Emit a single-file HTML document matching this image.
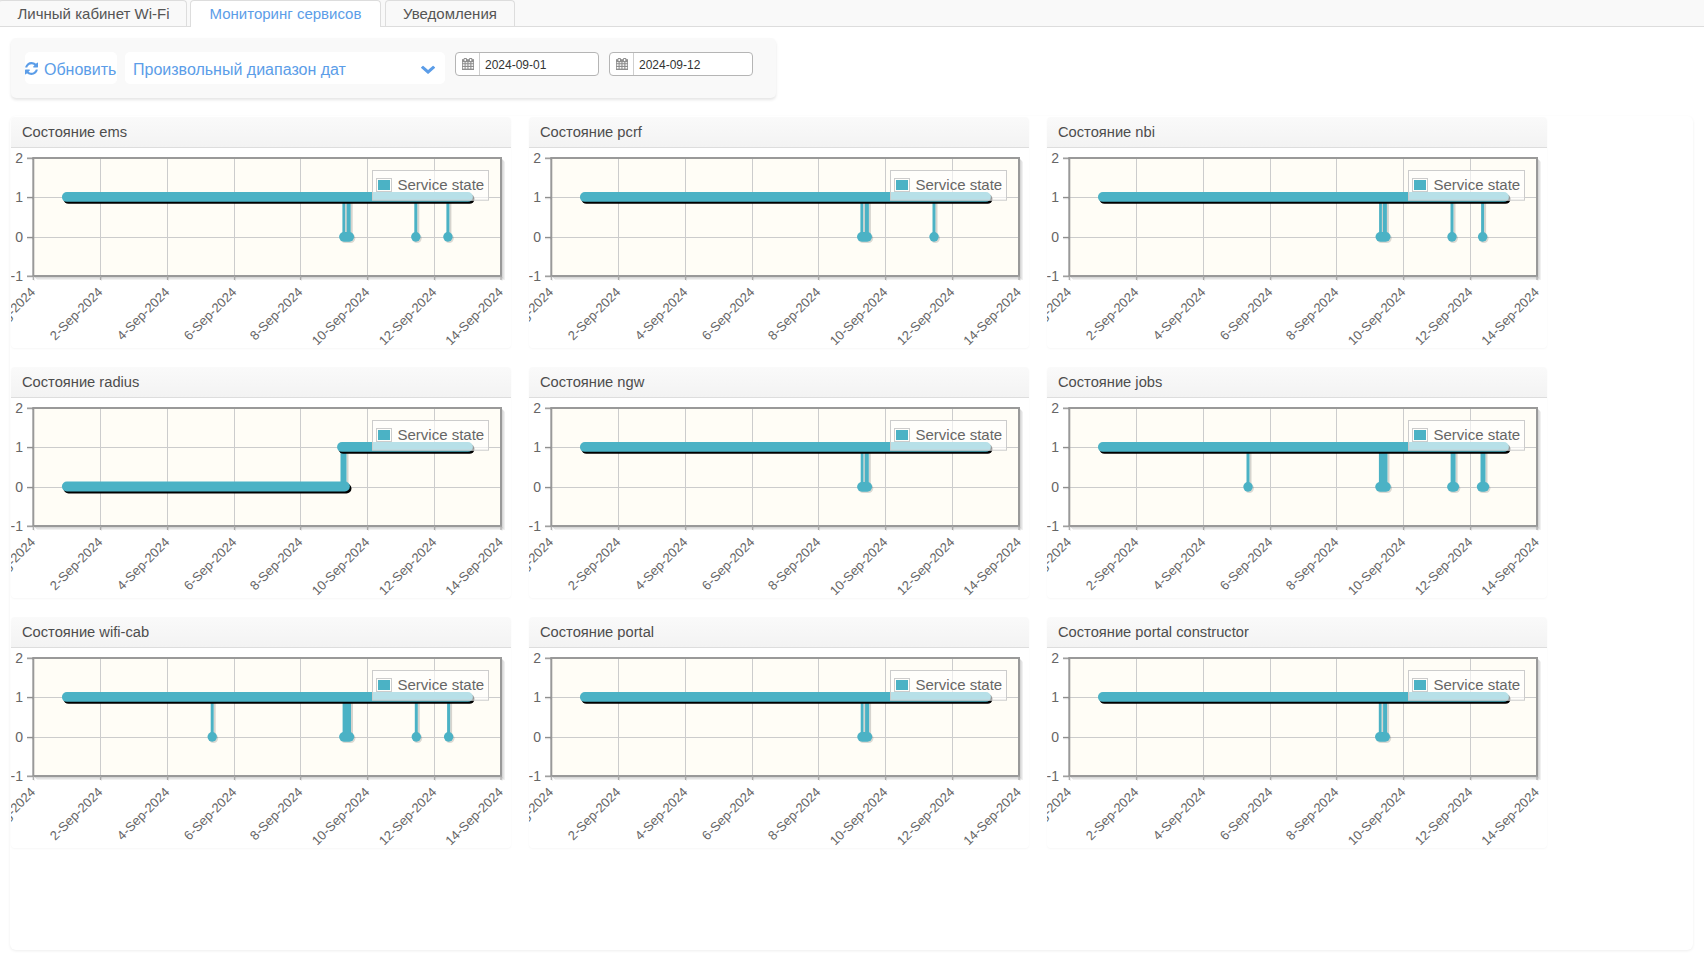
<!DOCTYPE html>
<html><head><meta charset="utf-8"><title>Мониторинг сервисов</title>
<style>
*{box-sizing:border-box}
html,body{margin:0;padding:0}
body{width:1704px;height:957px;overflow:hidden;background:#fff;position:relative;font-family:"Liberation Sans",sans-serif;color:#333}
.abs{position:absolute}
.tabbar{left:0;top:0;width:1704px;height:27px;background:#f9f9f9;border-bottom:1px solid #dddddd}
.tab{top:0;height:26px;border:1px solid #dddddd;border-bottom:none;border-radius:4px 4px 0 0;background:#f9f9f9;font-size:15px;color:#555;line-height:26px;text-align:center;white-space:nowrap}
.tab.act{background:#fff;height:27px;color:#5b9de8}
.toolbar{left:11px;top:38px;width:765px;height:60px;background:#f9f9f9;border-radius:5px;box-shadow:0 2px 3px rgba(0,0,0,0.10)}
.btn{background:#fff;border-radius:5px;top:52px;height:32px}
.blue{color:#5b9de8}
.dinp{top:52px;height:24px;background:#fff;border:1px solid #b5b5b5;border-radius:4px}
.dinp .sep{position:absolute;left:23px;top:0;width:1px;height:22px;background:#cfcfcf}
.dinp .txt{position:absolute;left:29px;top:1px;line-height:22px;font-size:12px;color:#333}
.container{left:10px;top:116px;width:1683px;height:834px;background:#ffffff;border-radius:6px;box-shadow:0 1px 3px rgba(0,0,0,0.07)}
.panel{width:500px;height:231px;background:#fff;border-radius:4px;box-shadow:0 1px 2px rgba(0,0,0,0.035)}
.ph{left:0;top:0;width:500px;height:31px;background:linear-gradient(#fafafa,#f3f3f3);border-bottom:1px solid #dddddd;border-radius:4px 4px 0 0;font-size:14.7px;line-height:30px;padding-left:11px;color:#4d4d4d;white-space:nowrap}
svg text{font-family:"Liberation Sans",sans-serif}
.yl{font-size:14px;fill:#666}
.xl{font-size:13px;fill:#666}
.lg{font-size:15px;fill:#666}
</style></head><body>

<div class="abs tabbar"></div>
<div class="abs tab" style="left:-2px;width:189px;padding-left:2px">Личный кабинет Wi-Fi</div>
<div class="abs tab act" style="left:190px;width:191px">Мониторинг сервисов</div>
<div class="abs tab" style="left:385px;width:130px">Уведомления</div>
<div class="abs toolbar"></div>
<div class="abs btn" style="left:25px;width:92px"></div>
<svg class="abs" style="left:25px;top:62px" width="13" height="13" viewBox="0 0 1536 1536"><path fill="#5b9de8" d="M1511 928q0 5-1 7-64 268-268 434.5T764 1536q-146 0-282.5-55T238 1324l-129 128q-19 19-45 19t-45-19-19-45V960q0-26 19-45t45-19h448q26 0 45 19t19 45-19 45l-137 137q71 66 161 102t187 36q134 0 250-65t186-179q11-17 53-117 8-23 30-23h192q13 0 22.5 9.5t9.5 22.5zm25-800v448q0 26-19 45t-45 19h-448q-26 0-45-19t-19-45 19-45l138-138Q969 256 768 256q-134 0-250 65T332 500q-11 17-53 117-8 23-30 23H50q-13 0-22.5-9.5T18 608v-7q65-268 270-434.5T768 0q146 0 284 55.5T1297 212l130-129q19-19 45-19t45 19 19 45z"/></svg>
<div class="abs blue" style="left:44px;top:53.5px;line-height:32px;font-size:16px">Обновить</div>
<div class="abs btn" style="left:125px;width:320px"></div>
<div class="abs blue" style="left:133px;top:53.5px;line-height:32px;font-size:16px">Произвольный диапазон дат</div>
<svg class="abs" style="left:415px;top:60px" width="26" height="20" viewBox="0 0 26 20"><path transform="translate(6 5.75) scale(0.008747 0.007874) translate(-90 -533)" fill="#5b9de8" d="M1683 808l-742 741q-19 19-45 19t-45-19L109 808q-19-19-19-45.5t19-45.5l166-165q19-19 45-19t45 19l531 531 531-531q19-19 45-19t45 19l166 165q19 19 19 45.5t-19 45.5z"/></svg>
<div class="abs dinp" style="left:455px;width:144px"><svg class="abs" style="left:6px;top:5px" width="12" height="12" viewBox="0 0 12 12"><rect x="0" y="1.2" width="12" height="10.8" fill="#8e8e8e"/><rect x="1.6" y="0" width="3.4" height="3" rx="1" fill="#8e8e8e"/><rect x="7" y="0" width="3.4" height="3" rx="1" fill="#8e8e8e"/><g fill="#ffffff"><rect x="2.5" y="1" width="1.4" height="2"/><rect x="7.9" y="1" width="1.4" height="2"/><rect x="0.8" y="4.2" width="1.8" height="1.0"/><rect x="0.8" y="6.3" width="1.8" height="1.5"/><rect x="0.8" y="9.0" width="1.8" height="1.6"/><rect x="3.6" y="4.2" width="1.8" height="1.0"/><rect x="3.6" y="6.3" width="1.8" height="1.5"/><rect x="3.6" y="9.0" width="1.8" height="1.6"/><rect x="6.5" y="4.2" width="1.8" height="1.0"/><rect x="6.5" y="6.3" width="1.8" height="1.5"/><rect x="6.5" y="9.0" width="1.8" height="1.6"/><rect x="9.4" y="4.2" width="1.8" height="1.0"/><rect x="9.4" y="6.3" width="1.8" height="1.5"/><rect x="9.4" y="9.0" width="1.8" height="1.6"/></g></svg><div class="sep"></div><div class="txt">2024-09-01</div></div>
<div class="abs dinp" style="left:609px;width:144px"><svg class="abs" style="left:6px;top:5px" width="12" height="12" viewBox="0 0 12 12"><rect x="0" y="1.2" width="12" height="10.8" fill="#8e8e8e"/><rect x="1.6" y="0" width="3.4" height="3" rx="1" fill="#8e8e8e"/><rect x="7" y="0" width="3.4" height="3" rx="1" fill="#8e8e8e"/><g fill="#ffffff"><rect x="2.5" y="1" width="1.4" height="2"/><rect x="7.9" y="1" width="1.4" height="2"/><rect x="0.8" y="4.2" width="1.8" height="1.0"/><rect x="0.8" y="6.3" width="1.8" height="1.5"/><rect x="0.8" y="9.0" width="1.8" height="1.6"/><rect x="3.6" y="4.2" width="1.8" height="1.0"/><rect x="3.6" y="6.3" width="1.8" height="1.5"/><rect x="3.6" y="9.0" width="1.8" height="1.6"/><rect x="6.5" y="4.2" width="1.8" height="1.0"/><rect x="6.5" y="6.3" width="1.8" height="1.5"/><rect x="6.5" y="9.0" width="1.8" height="1.6"/><rect x="9.4" y="4.2" width="1.8" height="1.0"/><rect x="9.4" y="6.3" width="1.8" height="1.5"/><rect x="9.4" y="9.0" width="1.8" height="1.6"/></g></svg><div class="sep"></div><div class="txt">2024-09-12</div></div>
<div class="abs container"></div>
<div class="abs panel" style="left:11px;top:117px"><div class="abs ph">Состояние ems</div></div>
<div class="abs panel" style="left:529px;top:117px"><div class="abs ph">Состояние pcrf</div></div>
<div class="abs panel" style="left:1047px;top:117px"><div class="abs ph">Состояние nbi</div></div>
<div class="abs panel" style="left:11px;top:367px"><div class="abs ph">Состояние radius</div></div>
<div class="abs panel" style="left:529px;top:367px"><div class="abs ph">Состояние ngw</div></div>
<div class="abs panel" style="left:1047px;top:367px"><div class="abs ph">Состояние jobs</div></div>
<div class="abs panel" style="left:11px;top:617px"><div class="abs ph">Состояние wifi-cab</div></div>
<div class="abs panel" style="left:529px;top:617px"><div class="abs ph">Состояние portal</div></div>
<div class="abs panel" style="left:1047px;top:617px"><div class="abs ph">Состояние portal constructor</div></div>
<svg class="abs" style="left:0;top:0" width="1704" height="957" viewBox="0 0 1704 957">
<clipPath id="cp0_0"><rect x="11" y="117" width="500" height="231"/></clipPath>
<g clip-path="url(#cp0_0)"><g transform="translate(0,0)">
<rect x="33.3" y="158.0" width="467.7" height="118.0" fill="#fffdf6"/>
<line x1="100.5" y1="158.0" x2="100.5" y2="276.0" stroke="#cccccc" stroke-width="1"/>
<line x1="167.5" y1="158.0" x2="167.5" y2="276.0" stroke="#cccccc" stroke-width="1"/>
<line x1="234.5" y1="158.0" x2="234.5" y2="276.0" stroke="#cccccc" stroke-width="1"/>
<line x1="300.5" y1="158.0" x2="300.5" y2="276.0" stroke="#cccccc" stroke-width="1"/>
<line x1="367.5" y1="158.0" x2="367.5" y2="276.0" stroke="#cccccc" stroke-width="1"/>
<line x1="434.5" y1="158.0" x2="434.5" y2="276.0" stroke="#cccccc" stroke-width="1"/>
<line x1="33.3" y1="197.5" x2="501.0" y2="197.5" stroke="#cccccc" stroke-width="1"/>
<line x1="33.3" y1="237.5" x2="501.0" y2="237.5" stroke="#cccccc" stroke-width="1"/>
<path d="M34.8 277.5 H502.5 V159.5" fill="none" stroke="rgba(0,0,0,0.16)" stroke-width="1"/>
<path d="M35.8 278.5 H503.5 V160.5" fill="none" stroke="rgba(0,0,0,0.11)" stroke-width="1"/>
<path d="M36.8 279.5 H504.5 V161.5" fill="none" stroke="rgba(0,0,0,0.06)" stroke-width="1"/>
<rect x="33.3" y="158.0" width="467.7" height="118.0" fill="none" stroke="#999999" stroke-width="2"/>
<line x1="27" y1="159.39999999999998" x2="33.3" y2="159.39999999999998" stroke="rgba(0,0,0,0.08)" stroke-width="1.2"/>
<line x1="27" y1="158.2" x2="33.3" y2="158.2" stroke="#8f8f8f" stroke-width="1.3"/>
<text x="23" y="162.79999999999998" text-anchor="end" class="yl">2</text>
<line x1="27" y1="198.7" x2="33.3" y2="198.7" stroke="rgba(0,0,0,0.08)" stroke-width="1.2"/>
<line x1="27" y1="197.5" x2="33.3" y2="197.5" stroke="#8f8f8f" stroke-width="1.3"/>
<text x="23" y="202.1" text-anchor="end" class="yl">1</text>
<line x1="27" y1="238.7" x2="33.3" y2="238.7" stroke="rgba(0,0,0,0.08)" stroke-width="1.2"/>
<line x1="27" y1="237.5" x2="33.3" y2="237.5" stroke="#8f8f8f" stroke-width="1.3"/>
<text x="23" y="242.1" text-anchor="end" class="yl">0</text>
<line x1="27" y1="277.4" x2="33.3" y2="277.4" stroke="rgba(0,0,0,0.08)" stroke-width="1.2"/>
<line x1="27" y1="276.2" x2="33.3" y2="276.2" stroke="#8f8f8f" stroke-width="1.3"/>
<text x="23" y="280.8" text-anchor="end" class="yl">-1</text>
<line x1="34.3" y1="277.0" x2="34.3" y2="281.0" stroke="rgba(0,0,0,0.07)" stroke-width="1.2"/>
<line x1="33.3" y1="276.0" x2="33.3" y2="280.0" stroke="#a8a8a8" stroke-width="1.2"/>
<text transform="translate(29.799999999999997,286.5) rotate(-45)" x="0" y="9" text-anchor="end" class="xl">31-Aug-2024</text>
<line x1="101.5" y1="277.0" x2="101.5" y2="281.0" stroke="rgba(0,0,0,0.07)" stroke-width="1.2"/>
<line x1="100.5" y1="276.0" x2="100.5" y2="280.0" stroke="#a8a8a8" stroke-width="1.2"/>
<text transform="translate(97.0,286.5) rotate(-45)" x="0" y="9" text-anchor="end" class="xl">2-Sep-2024</text>
<line x1="168.5" y1="277.0" x2="168.5" y2="281.0" stroke="rgba(0,0,0,0.07)" stroke-width="1.2"/>
<line x1="167.5" y1="276.0" x2="167.5" y2="280.0" stroke="#a8a8a8" stroke-width="1.2"/>
<text transform="translate(164.0,286.5) rotate(-45)" x="0" y="9" text-anchor="end" class="xl">4-Sep-2024</text>
<line x1="235.5" y1="277.0" x2="235.5" y2="281.0" stroke="rgba(0,0,0,0.07)" stroke-width="1.2"/>
<line x1="234.5" y1="276.0" x2="234.5" y2="280.0" stroke="#a8a8a8" stroke-width="1.2"/>
<text transform="translate(231.0,286.5) rotate(-45)" x="0" y="9" text-anchor="end" class="xl">6-Sep-2024</text>
<line x1="301.5" y1="277.0" x2="301.5" y2="281.0" stroke="rgba(0,0,0,0.07)" stroke-width="1.2"/>
<line x1="300.5" y1="276.0" x2="300.5" y2="280.0" stroke="#a8a8a8" stroke-width="1.2"/>
<text transform="translate(297.0,286.5) rotate(-45)" x="0" y="9" text-anchor="end" class="xl">8-Sep-2024</text>
<line x1="368.5" y1="277.0" x2="368.5" y2="281.0" stroke="rgba(0,0,0,0.07)" stroke-width="1.2"/>
<line x1="367.5" y1="276.0" x2="367.5" y2="280.0" stroke="#a8a8a8" stroke-width="1.2"/>
<text transform="translate(364.0,286.5) rotate(-45)" x="0" y="9" text-anchor="end" class="xl">10-Sep-2024</text>
<line x1="435.5" y1="277.0" x2="435.5" y2="281.0" stroke="rgba(0,0,0,0.07)" stroke-width="1.2"/>
<line x1="434.5" y1="276.0" x2="434.5" y2="280.0" stroke="#a8a8a8" stroke-width="1.2"/>
<text transform="translate(431.0,286.5) rotate(-45)" x="0" y="9" text-anchor="end" class="xl">12-Sep-2024</text>
<line x1="502.0" y1="277.0" x2="502.0" y2="281.0" stroke="rgba(0,0,0,0.07)" stroke-width="1.2"/>
<line x1="501.0" y1="276.0" x2="501.0" y2="280.0" stroke="#a8a8a8" stroke-width="1.2"/>
<text transform="translate(497.5,286.5) rotate(-45)" x="0" y="9" text-anchor="end" class="xl">14-Sep-2024</text>
<line x1="346.2" y1="196.88333333333335" x2="346.2" y2="236.86666666666667" stroke="rgba(0,0,0,0.16)" stroke-width="2"/>
<line x1="343.8" y1="196.88333333333335" x2="343.8" y2="236.86666666666667" stroke="#4bb2c5" stroke-width="2.8"/>
<line x1="351.7" y1="196.88333333333335" x2="351.7" y2="236.86666666666667" stroke="rgba(0,0,0,0.16)" stroke-width="2"/>
<line x1="348.7" y1="196.88333333333335" x2="348.7" y2="236.86666666666667" stroke="#4bb2c5" stroke-width="4.0"/>
<line x1="418.3" y1="196.88333333333335" x2="418.3" y2="236.86666666666667" stroke="rgba(0,0,0,0.16)" stroke-width="2"/>
<line x1="415.8" y1="196.88333333333335" x2="415.8" y2="236.86666666666667" stroke="#4bb2c5" stroke-width="3.0"/>
<line x1="450.4" y1="196.88333333333335" x2="450.4" y2="236.86666666666667" stroke="rgba(0,0,0,0.16)" stroke-width="2"/>
<line x1="447.9" y1="196.88333333333335" x2="447.9" y2="236.86666666666667" stroke="#4bb2c5" stroke-width="3.0"/>
<line x1="68.5" y1="198.88333333333335" x2="469.5" y2="198.88333333333335" stroke="#000" stroke-width="9.9" stroke-linecap="round"/>
<line x1="66.9" y1="196.88333333333335" x2="467.9" y2="196.88333333333335" stroke="#4bb2c5" stroke-width="9.9" stroke-linecap="round"/>
<rect x="340.3" y="233.46666666666667" width="15.0" height="9.6" rx="4.8" fill="rgba(0,0,0,0.14)"/>
<rect x="412.3" y="233.46666666666667" width="9.4" height="9.6" rx="4.8" fill="rgba(0,0,0,0.14)"/>
<rect x="444.4" y="233.46666666666667" width="9.4" height="9.6" rx="4.8" fill="rgba(0,0,0,0.14)"/>
<rect x="339.1" y="232.06666666666666" width="15.0" height="9.6" rx="4.8" fill="#4bb2c5"/>
<rect x="411.1" y="232.06666666666666" width="9.4" height="9.6" rx="4.8" fill="#4bb2c5"/>
<rect x="443.2" y="232.06666666666666" width="9.4" height="9.6" rx="4.8" fill="#4bb2c5"/>
<rect x="372.5" y="170.5" width="116" height="29.7" fill="rgba(255,255,255,0.6)" stroke="#cccccc" stroke-width="1"/>
<rect x="376.5" y="178.5" width="15" height="13" fill="none" stroke="#cccccc" stroke-width="1"/>
<rect x="378" y="180" width="12" height="10" fill="#4bb2c5"/>
<text x="397.5" y="190" class="lg">Service state</text>
</g></g>
<clipPath id="cp518_0"><rect x="529" y="117" width="500" height="231"/></clipPath>
<g clip-path="url(#cp518_0)"><g transform="translate(518,0)">
<rect x="33.3" y="158.0" width="467.7" height="118.0" fill="#fffdf6"/>
<line x1="100.5" y1="158.0" x2="100.5" y2="276.0" stroke="#cccccc" stroke-width="1"/>
<line x1="167.5" y1="158.0" x2="167.5" y2="276.0" stroke="#cccccc" stroke-width="1"/>
<line x1="234.5" y1="158.0" x2="234.5" y2="276.0" stroke="#cccccc" stroke-width="1"/>
<line x1="300.5" y1="158.0" x2="300.5" y2="276.0" stroke="#cccccc" stroke-width="1"/>
<line x1="367.5" y1="158.0" x2="367.5" y2="276.0" stroke="#cccccc" stroke-width="1"/>
<line x1="434.5" y1="158.0" x2="434.5" y2="276.0" stroke="#cccccc" stroke-width="1"/>
<line x1="33.3" y1="197.5" x2="501.0" y2="197.5" stroke="#cccccc" stroke-width="1"/>
<line x1="33.3" y1="237.5" x2="501.0" y2="237.5" stroke="#cccccc" stroke-width="1"/>
<path d="M34.8 277.5 H502.5 V159.5" fill="none" stroke="rgba(0,0,0,0.16)" stroke-width="1"/>
<path d="M35.8 278.5 H503.5 V160.5" fill="none" stroke="rgba(0,0,0,0.11)" stroke-width="1"/>
<path d="M36.8 279.5 H504.5 V161.5" fill="none" stroke="rgba(0,0,0,0.06)" stroke-width="1"/>
<rect x="33.3" y="158.0" width="467.7" height="118.0" fill="none" stroke="#999999" stroke-width="2"/>
<line x1="27" y1="159.39999999999998" x2="33.3" y2="159.39999999999998" stroke="rgba(0,0,0,0.08)" stroke-width="1.2"/>
<line x1="27" y1="158.2" x2="33.3" y2="158.2" stroke="#8f8f8f" stroke-width="1.3"/>
<text x="23" y="162.79999999999998" text-anchor="end" class="yl">2</text>
<line x1="27" y1="198.7" x2="33.3" y2="198.7" stroke="rgba(0,0,0,0.08)" stroke-width="1.2"/>
<line x1="27" y1="197.5" x2="33.3" y2="197.5" stroke="#8f8f8f" stroke-width="1.3"/>
<text x="23" y="202.1" text-anchor="end" class="yl">1</text>
<line x1="27" y1="238.7" x2="33.3" y2="238.7" stroke="rgba(0,0,0,0.08)" stroke-width="1.2"/>
<line x1="27" y1="237.5" x2="33.3" y2="237.5" stroke="#8f8f8f" stroke-width="1.3"/>
<text x="23" y="242.1" text-anchor="end" class="yl">0</text>
<line x1="27" y1="277.4" x2="33.3" y2="277.4" stroke="rgba(0,0,0,0.08)" stroke-width="1.2"/>
<line x1="27" y1="276.2" x2="33.3" y2="276.2" stroke="#8f8f8f" stroke-width="1.3"/>
<text x="23" y="280.8" text-anchor="end" class="yl">-1</text>
<line x1="34.3" y1="277.0" x2="34.3" y2="281.0" stroke="rgba(0,0,0,0.07)" stroke-width="1.2"/>
<line x1="33.3" y1="276.0" x2="33.3" y2="280.0" stroke="#a8a8a8" stroke-width="1.2"/>
<text transform="translate(29.799999999999997,286.5) rotate(-45)" x="0" y="9" text-anchor="end" class="xl">31-Aug-2024</text>
<line x1="101.5" y1="277.0" x2="101.5" y2="281.0" stroke="rgba(0,0,0,0.07)" stroke-width="1.2"/>
<line x1="100.5" y1="276.0" x2="100.5" y2="280.0" stroke="#a8a8a8" stroke-width="1.2"/>
<text transform="translate(97.0,286.5) rotate(-45)" x="0" y="9" text-anchor="end" class="xl">2-Sep-2024</text>
<line x1="168.5" y1="277.0" x2="168.5" y2="281.0" stroke="rgba(0,0,0,0.07)" stroke-width="1.2"/>
<line x1="167.5" y1="276.0" x2="167.5" y2="280.0" stroke="#a8a8a8" stroke-width="1.2"/>
<text transform="translate(164.0,286.5) rotate(-45)" x="0" y="9" text-anchor="end" class="xl">4-Sep-2024</text>
<line x1="235.5" y1="277.0" x2="235.5" y2="281.0" stroke="rgba(0,0,0,0.07)" stroke-width="1.2"/>
<line x1="234.5" y1="276.0" x2="234.5" y2="280.0" stroke="#a8a8a8" stroke-width="1.2"/>
<text transform="translate(231.0,286.5) rotate(-45)" x="0" y="9" text-anchor="end" class="xl">6-Sep-2024</text>
<line x1="301.5" y1="277.0" x2="301.5" y2="281.0" stroke="rgba(0,0,0,0.07)" stroke-width="1.2"/>
<line x1="300.5" y1="276.0" x2="300.5" y2="280.0" stroke="#a8a8a8" stroke-width="1.2"/>
<text transform="translate(297.0,286.5) rotate(-45)" x="0" y="9" text-anchor="end" class="xl">8-Sep-2024</text>
<line x1="368.5" y1="277.0" x2="368.5" y2="281.0" stroke="rgba(0,0,0,0.07)" stroke-width="1.2"/>
<line x1="367.5" y1="276.0" x2="367.5" y2="280.0" stroke="#a8a8a8" stroke-width="1.2"/>
<text transform="translate(364.0,286.5) rotate(-45)" x="0" y="9" text-anchor="end" class="xl">10-Sep-2024</text>
<line x1="435.5" y1="277.0" x2="435.5" y2="281.0" stroke="rgba(0,0,0,0.07)" stroke-width="1.2"/>
<line x1="434.5" y1="276.0" x2="434.5" y2="280.0" stroke="#a8a8a8" stroke-width="1.2"/>
<text transform="translate(431.0,286.5) rotate(-45)" x="0" y="9" text-anchor="end" class="xl">12-Sep-2024</text>
<line x1="502.0" y1="277.0" x2="502.0" y2="281.0" stroke="rgba(0,0,0,0.07)" stroke-width="1.2"/>
<line x1="501.0" y1="276.0" x2="501.0" y2="280.0" stroke="#a8a8a8" stroke-width="1.2"/>
<text transform="translate(497.5,286.5) rotate(-45)" x="0" y="9" text-anchor="end" class="xl">14-Sep-2024</text>
<line x1="346.2" y1="196.88333333333335" x2="346.2" y2="236.86666666666667" stroke="rgba(0,0,0,0.16)" stroke-width="2"/>
<line x1="343.8" y1="196.88333333333335" x2="343.8" y2="236.86666666666667" stroke="#4bb2c5" stroke-width="2.8"/>
<line x1="351.9" y1="196.88333333333335" x2="351.9" y2="236.86666666666667" stroke="rgba(0,0,0,0.16)" stroke-width="2"/>
<line x1="348.9" y1="196.88333333333335" x2="348.9" y2="236.86666666666667" stroke="#4bb2c5" stroke-width="4.0"/>
<line x1="418.5" y1="196.88333333333335" x2="418.5" y2="236.86666666666667" stroke="rgba(0,0,0,0.16)" stroke-width="2"/>
<line x1="416.0" y1="196.88333333333335" x2="416.0" y2="236.86666666666667" stroke="#4bb2c5" stroke-width="3.0"/>
<line x1="68.5" y1="198.88333333333335" x2="469.5" y2="198.88333333333335" stroke="#000" stroke-width="9.9" stroke-linecap="round"/>
<line x1="66.9" y1="196.88333333333335" x2="467.9" y2="196.88333333333335" stroke="#4bb2c5" stroke-width="9.9" stroke-linecap="round"/>
<rect x="340.2" y="233.46666666666667" width="15.0" height="9.6" rx="4.8" fill="rgba(0,0,0,0.14)"/>
<rect x="412.5" y="233.46666666666667" width="9.4" height="9.6" rx="4.8" fill="rgba(0,0,0,0.14)"/>
<rect x="339.0" y="232.06666666666666" width="15.0" height="9.6" rx="4.8" fill="#4bb2c5"/>
<rect x="411.3" y="232.06666666666666" width="9.4" height="9.6" rx="4.8" fill="#4bb2c5"/>
<rect x="372.5" y="170.5" width="116" height="29.7" fill="rgba(255,255,255,0.6)" stroke="#cccccc" stroke-width="1"/>
<rect x="376.5" y="178.5" width="15" height="13" fill="none" stroke="#cccccc" stroke-width="1"/>
<rect x="378" y="180" width="12" height="10" fill="#4bb2c5"/>
<text x="397.5" y="190" class="lg">Service state</text>
</g></g>
<clipPath id="cp1036_0"><rect x="1047" y="117" width="500" height="231"/></clipPath>
<g clip-path="url(#cp1036_0)"><g transform="translate(1036,0)">
<rect x="33.3" y="158.0" width="467.7" height="118.0" fill="#fffdf6"/>
<line x1="100.5" y1="158.0" x2="100.5" y2="276.0" stroke="#cccccc" stroke-width="1"/>
<line x1="167.5" y1="158.0" x2="167.5" y2="276.0" stroke="#cccccc" stroke-width="1"/>
<line x1="234.5" y1="158.0" x2="234.5" y2="276.0" stroke="#cccccc" stroke-width="1"/>
<line x1="300.5" y1="158.0" x2="300.5" y2="276.0" stroke="#cccccc" stroke-width="1"/>
<line x1="367.5" y1="158.0" x2="367.5" y2="276.0" stroke="#cccccc" stroke-width="1"/>
<line x1="434.5" y1="158.0" x2="434.5" y2="276.0" stroke="#cccccc" stroke-width="1"/>
<line x1="33.3" y1="197.5" x2="501.0" y2="197.5" stroke="#cccccc" stroke-width="1"/>
<line x1="33.3" y1="237.5" x2="501.0" y2="237.5" stroke="#cccccc" stroke-width="1"/>
<path d="M34.8 277.5 H502.5 V159.5" fill="none" stroke="rgba(0,0,0,0.16)" stroke-width="1"/>
<path d="M35.8 278.5 H503.5 V160.5" fill="none" stroke="rgba(0,0,0,0.11)" stroke-width="1"/>
<path d="M36.8 279.5 H504.5 V161.5" fill="none" stroke="rgba(0,0,0,0.06)" stroke-width="1"/>
<rect x="33.3" y="158.0" width="467.7" height="118.0" fill="none" stroke="#999999" stroke-width="2"/>
<line x1="27" y1="159.39999999999998" x2="33.3" y2="159.39999999999998" stroke="rgba(0,0,0,0.08)" stroke-width="1.2"/>
<line x1="27" y1="158.2" x2="33.3" y2="158.2" stroke="#8f8f8f" stroke-width="1.3"/>
<text x="23" y="162.79999999999998" text-anchor="end" class="yl">2</text>
<line x1="27" y1="198.7" x2="33.3" y2="198.7" stroke="rgba(0,0,0,0.08)" stroke-width="1.2"/>
<line x1="27" y1="197.5" x2="33.3" y2="197.5" stroke="#8f8f8f" stroke-width="1.3"/>
<text x="23" y="202.1" text-anchor="end" class="yl">1</text>
<line x1="27" y1="238.7" x2="33.3" y2="238.7" stroke="rgba(0,0,0,0.08)" stroke-width="1.2"/>
<line x1="27" y1="237.5" x2="33.3" y2="237.5" stroke="#8f8f8f" stroke-width="1.3"/>
<text x="23" y="242.1" text-anchor="end" class="yl">0</text>
<line x1="27" y1="277.4" x2="33.3" y2="277.4" stroke="rgba(0,0,0,0.08)" stroke-width="1.2"/>
<line x1="27" y1="276.2" x2="33.3" y2="276.2" stroke="#8f8f8f" stroke-width="1.3"/>
<text x="23" y="280.8" text-anchor="end" class="yl">-1</text>
<line x1="34.3" y1="277.0" x2="34.3" y2="281.0" stroke="rgba(0,0,0,0.07)" stroke-width="1.2"/>
<line x1="33.3" y1="276.0" x2="33.3" y2="280.0" stroke="#a8a8a8" stroke-width="1.2"/>
<text transform="translate(29.799999999999997,286.5) rotate(-45)" x="0" y="9" text-anchor="end" class="xl">31-Aug-2024</text>
<line x1="101.5" y1="277.0" x2="101.5" y2="281.0" stroke="rgba(0,0,0,0.07)" stroke-width="1.2"/>
<line x1="100.5" y1="276.0" x2="100.5" y2="280.0" stroke="#a8a8a8" stroke-width="1.2"/>
<text transform="translate(97.0,286.5) rotate(-45)" x="0" y="9" text-anchor="end" class="xl">2-Sep-2024</text>
<line x1="168.5" y1="277.0" x2="168.5" y2="281.0" stroke="rgba(0,0,0,0.07)" stroke-width="1.2"/>
<line x1="167.5" y1="276.0" x2="167.5" y2="280.0" stroke="#a8a8a8" stroke-width="1.2"/>
<text transform="translate(164.0,286.5) rotate(-45)" x="0" y="9" text-anchor="end" class="xl">4-Sep-2024</text>
<line x1="235.5" y1="277.0" x2="235.5" y2="281.0" stroke="rgba(0,0,0,0.07)" stroke-width="1.2"/>
<line x1="234.5" y1="276.0" x2="234.5" y2="280.0" stroke="#a8a8a8" stroke-width="1.2"/>
<text transform="translate(231.0,286.5) rotate(-45)" x="0" y="9" text-anchor="end" class="xl">6-Sep-2024</text>
<line x1="301.5" y1="277.0" x2="301.5" y2="281.0" stroke="rgba(0,0,0,0.07)" stroke-width="1.2"/>
<line x1="300.5" y1="276.0" x2="300.5" y2="280.0" stroke="#a8a8a8" stroke-width="1.2"/>
<text transform="translate(297.0,286.5) rotate(-45)" x="0" y="9" text-anchor="end" class="xl">8-Sep-2024</text>
<line x1="368.5" y1="277.0" x2="368.5" y2="281.0" stroke="rgba(0,0,0,0.07)" stroke-width="1.2"/>
<line x1="367.5" y1="276.0" x2="367.5" y2="280.0" stroke="#a8a8a8" stroke-width="1.2"/>
<text transform="translate(364.0,286.5) rotate(-45)" x="0" y="9" text-anchor="end" class="xl">10-Sep-2024</text>
<line x1="435.5" y1="277.0" x2="435.5" y2="281.0" stroke="rgba(0,0,0,0.07)" stroke-width="1.2"/>
<line x1="434.5" y1="276.0" x2="434.5" y2="280.0" stroke="#a8a8a8" stroke-width="1.2"/>
<text transform="translate(431.0,286.5) rotate(-45)" x="0" y="9" text-anchor="end" class="xl">12-Sep-2024</text>
<line x1="502.0" y1="277.0" x2="502.0" y2="281.0" stroke="rgba(0,0,0,0.07)" stroke-width="1.2"/>
<line x1="501.0" y1="276.0" x2="501.0" y2="280.0" stroke="#a8a8a8" stroke-width="1.2"/>
<text transform="translate(497.5,286.5) rotate(-45)" x="0" y="9" text-anchor="end" class="xl">14-Sep-2024</text>
<line x1="346.9" y1="196.88333333333335" x2="346.9" y2="236.86666666666667" stroke="rgba(0,0,0,0.16)" stroke-width="2"/>
<line x1="344.5" y1="196.88333333333335" x2="344.5" y2="236.86666666666667" stroke="#4bb2c5" stroke-width="2.8"/>
<line x1="351.9" y1="196.88333333333335" x2="351.9" y2="236.86666666666667" stroke="rgba(0,0,0,0.16)" stroke-width="2"/>
<line x1="348.9" y1="196.88333333333335" x2="348.9" y2="236.86666666666667" stroke="#4bb2c5" stroke-width="4.0"/>
<line x1="418.5" y1="196.88333333333335" x2="418.5" y2="236.86666666666667" stroke="rgba(0,0,0,0.16)" stroke-width="2"/>
<line x1="416.0" y1="196.88333333333335" x2="416.0" y2="236.86666666666667" stroke="#4bb2c5" stroke-width="3.0"/>
<line x1="449.1" y1="196.88333333333335" x2="449.1" y2="236.86666666666667" stroke="rgba(0,0,0,0.16)" stroke-width="2"/>
<line x1="446.6" y1="196.88333333333335" x2="446.6" y2="236.86666666666667" stroke="#4bb2c5" stroke-width="3.0"/>
<line x1="68.5" y1="198.88333333333335" x2="469.5" y2="198.88333333333335" stroke="#000" stroke-width="9.9" stroke-linecap="round"/>
<line x1="66.9" y1="196.88333333333335" x2="467.9" y2="196.88333333333335" stroke="#4bb2c5" stroke-width="9.9" stroke-linecap="round"/>
<rect x="340.7" y="233.46666666666667" width="15.0" height="9.6" rx="4.8" fill="rgba(0,0,0,0.14)"/>
<rect x="412.5" y="233.46666666666667" width="9.4" height="9.6" rx="4.8" fill="rgba(0,0,0,0.14)"/>
<rect x="443.1" y="233.46666666666667" width="9.4" height="9.6" rx="4.8" fill="rgba(0,0,0,0.14)"/>
<rect x="339.5" y="232.06666666666666" width="15.0" height="9.6" rx="4.8" fill="#4bb2c5"/>
<rect x="411.3" y="232.06666666666666" width="9.4" height="9.6" rx="4.8" fill="#4bb2c5"/>
<rect x="441.90000000000003" y="232.06666666666666" width="9.4" height="9.6" rx="4.8" fill="#4bb2c5"/>
<rect x="372.5" y="170.5" width="116" height="29.7" fill="rgba(255,255,255,0.6)" stroke="#cccccc" stroke-width="1"/>
<rect x="376.5" y="178.5" width="15" height="13" fill="none" stroke="#cccccc" stroke-width="1"/>
<rect x="378" y="180" width="12" height="10" fill="#4bb2c5"/>
<text x="397.5" y="190" class="lg">Service state</text>
</g></g>
<clipPath id="cp0_250"><rect x="11" y="367" width="500" height="231"/></clipPath>
<g clip-path="url(#cp0_250)"><g transform="translate(0,250)">
<rect x="33.3" y="158.0" width="467.7" height="118.0" fill="#fffdf6"/>
<line x1="100.5" y1="158.0" x2="100.5" y2="276.0" stroke="#cccccc" stroke-width="1"/>
<line x1="167.5" y1="158.0" x2="167.5" y2="276.0" stroke="#cccccc" stroke-width="1"/>
<line x1="234.5" y1="158.0" x2="234.5" y2="276.0" stroke="#cccccc" stroke-width="1"/>
<line x1="300.5" y1="158.0" x2="300.5" y2="276.0" stroke="#cccccc" stroke-width="1"/>
<line x1="367.5" y1="158.0" x2="367.5" y2="276.0" stroke="#cccccc" stroke-width="1"/>
<line x1="434.5" y1="158.0" x2="434.5" y2="276.0" stroke="#cccccc" stroke-width="1"/>
<line x1="33.3" y1="197.5" x2="501.0" y2="197.5" stroke="#cccccc" stroke-width="1"/>
<line x1="33.3" y1="237.5" x2="501.0" y2="237.5" stroke="#cccccc" stroke-width="1"/>
<path d="M34.8 277.5 H502.5 V159.5" fill="none" stroke="rgba(0,0,0,0.16)" stroke-width="1"/>
<path d="M35.8 278.5 H503.5 V160.5" fill="none" stroke="rgba(0,0,0,0.11)" stroke-width="1"/>
<path d="M36.8 279.5 H504.5 V161.5" fill="none" stroke="rgba(0,0,0,0.06)" stroke-width="1"/>
<rect x="33.3" y="158.0" width="467.7" height="118.0" fill="none" stroke="#999999" stroke-width="2"/>
<line x1="27" y1="159.39999999999998" x2="33.3" y2="159.39999999999998" stroke="rgba(0,0,0,0.08)" stroke-width="1.2"/>
<line x1="27" y1="158.2" x2="33.3" y2="158.2" stroke="#8f8f8f" stroke-width="1.3"/>
<text x="23" y="162.79999999999998" text-anchor="end" class="yl">2</text>
<line x1="27" y1="198.7" x2="33.3" y2="198.7" stroke="rgba(0,0,0,0.08)" stroke-width="1.2"/>
<line x1="27" y1="197.5" x2="33.3" y2="197.5" stroke="#8f8f8f" stroke-width="1.3"/>
<text x="23" y="202.1" text-anchor="end" class="yl">1</text>
<line x1="27" y1="238.7" x2="33.3" y2="238.7" stroke="rgba(0,0,0,0.08)" stroke-width="1.2"/>
<line x1="27" y1="237.5" x2="33.3" y2="237.5" stroke="#8f8f8f" stroke-width="1.3"/>
<text x="23" y="242.1" text-anchor="end" class="yl">0</text>
<line x1="27" y1="277.4" x2="33.3" y2="277.4" stroke="rgba(0,0,0,0.08)" stroke-width="1.2"/>
<line x1="27" y1="276.2" x2="33.3" y2="276.2" stroke="#8f8f8f" stroke-width="1.3"/>
<text x="23" y="280.8" text-anchor="end" class="yl">-1</text>
<line x1="34.3" y1="277.0" x2="34.3" y2="281.0" stroke="rgba(0,0,0,0.07)" stroke-width="1.2"/>
<line x1="33.3" y1="276.0" x2="33.3" y2="280.0" stroke="#a8a8a8" stroke-width="1.2"/>
<text transform="translate(29.799999999999997,286.5) rotate(-45)" x="0" y="9" text-anchor="end" class="xl">31-Aug-2024</text>
<line x1="101.5" y1="277.0" x2="101.5" y2="281.0" stroke="rgba(0,0,0,0.07)" stroke-width="1.2"/>
<line x1="100.5" y1="276.0" x2="100.5" y2="280.0" stroke="#a8a8a8" stroke-width="1.2"/>
<text transform="translate(97.0,286.5) rotate(-45)" x="0" y="9" text-anchor="end" class="xl">2-Sep-2024</text>
<line x1="168.5" y1="277.0" x2="168.5" y2="281.0" stroke="rgba(0,0,0,0.07)" stroke-width="1.2"/>
<line x1="167.5" y1="276.0" x2="167.5" y2="280.0" stroke="#a8a8a8" stroke-width="1.2"/>
<text transform="translate(164.0,286.5) rotate(-45)" x="0" y="9" text-anchor="end" class="xl">4-Sep-2024</text>
<line x1="235.5" y1="277.0" x2="235.5" y2="281.0" stroke="rgba(0,0,0,0.07)" stroke-width="1.2"/>
<line x1="234.5" y1="276.0" x2="234.5" y2="280.0" stroke="#a8a8a8" stroke-width="1.2"/>
<text transform="translate(231.0,286.5) rotate(-45)" x="0" y="9" text-anchor="end" class="xl">6-Sep-2024</text>
<line x1="301.5" y1="277.0" x2="301.5" y2="281.0" stroke="rgba(0,0,0,0.07)" stroke-width="1.2"/>
<line x1="300.5" y1="276.0" x2="300.5" y2="280.0" stroke="#a8a8a8" stroke-width="1.2"/>
<text transform="translate(297.0,286.5) rotate(-45)" x="0" y="9" text-anchor="end" class="xl">8-Sep-2024</text>
<line x1="368.5" y1="277.0" x2="368.5" y2="281.0" stroke="rgba(0,0,0,0.07)" stroke-width="1.2"/>
<line x1="367.5" y1="276.0" x2="367.5" y2="280.0" stroke="#a8a8a8" stroke-width="1.2"/>
<text transform="translate(364.0,286.5) rotate(-45)" x="0" y="9" text-anchor="end" class="xl">10-Sep-2024</text>
<line x1="435.5" y1="277.0" x2="435.5" y2="281.0" stroke="rgba(0,0,0,0.07)" stroke-width="1.2"/>
<line x1="434.5" y1="276.0" x2="434.5" y2="280.0" stroke="#a8a8a8" stroke-width="1.2"/>
<text transform="translate(431.0,286.5) rotate(-45)" x="0" y="9" text-anchor="end" class="xl">12-Sep-2024</text>
<line x1="502.0" y1="277.0" x2="502.0" y2="281.0" stroke="rgba(0,0,0,0.07)" stroke-width="1.2"/>
<line x1="501.0" y1="276.0" x2="501.0" y2="280.0" stroke="#a8a8a8" stroke-width="1.2"/>
<text transform="translate(497.5,286.5) rotate(-45)" x="0" y="9" text-anchor="end" class="xl">14-Sep-2024</text>
<line x1="347.5" y1="196.88333333333335" x2="347.5" y2="236.86666666666667" stroke="rgba(0,0,0,0.16)" stroke-width="2"/>
<line x1="343.5" y1="196.88333333333335" x2="343.5" y2="236.86666666666667" stroke="#4bb2c5" stroke-width="6.0"/>
<line x1="68.5" y1="238.46666666666667" x2="346.5" y2="238.46666666666667" stroke="#000" stroke-width="9.9" stroke-linecap="round"/>
<line x1="66.9" y1="236.46666666666667" x2="344.9" y2="236.46666666666667" stroke="#4bb2c5" stroke-width="9.9" stroke-linecap="round"/>
<line x1="343.6" y1="198.88333333333335" x2="469.5" y2="198.88333333333335" stroke="#000" stroke-width="9.9" stroke-linecap="round"/>
<line x1="342.0" y1="196.88333333333335" x2="467.9" y2="196.88333333333335" stroke="#4bb2c5" stroke-width="9.9" stroke-linecap="round"/>
<rect x="372.5" y="170.5" width="116" height="29.7" fill="rgba(255,255,255,0.6)" stroke="#cccccc" stroke-width="1"/>
<rect x="376.5" y="178.5" width="15" height="13" fill="none" stroke="#cccccc" stroke-width="1"/>
<rect x="378" y="180" width="12" height="10" fill="#4bb2c5"/>
<text x="397.5" y="190" class="lg">Service state</text>
</g></g>
<clipPath id="cp518_250"><rect x="529" y="367" width="500" height="231"/></clipPath>
<g clip-path="url(#cp518_250)"><g transform="translate(518,250)">
<rect x="33.3" y="158.0" width="467.7" height="118.0" fill="#fffdf6"/>
<line x1="100.5" y1="158.0" x2="100.5" y2="276.0" stroke="#cccccc" stroke-width="1"/>
<line x1="167.5" y1="158.0" x2="167.5" y2="276.0" stroke="#cccccc" stroke-width="1"/>
<line x1="234.5" y1="158.0" x2="234.5" y2="276.0" stroke="#cccccc" stroke-width="1"/>
<line x1="300.5" y1="158.0" x2="300.5" y2="276.0" stroke="#cccccc" stroke-width="1"/>
<line x1="367.5" y1="158.0" x2="367.5" y2="276.0" stroke="#cccccc" stroke-width="1"/>
<line x1="434.5" y1="158.0" x2="434.5" y2="276.0" stroke="#cccccc" stroke-width="1"/>
<line x1="33.3" y1="197.5" x2="501.0" y2="197.5" stroke="#cccccc" stroke-width="1"/>
<line x1="33.3" y1="237.5" x2="501.0" y2="237.5" stroke="#cccccc" stroke-width="1"/>
<path d="M34.8 277.5 H502.5 V159.5" fill="none" stroke="rgba(0,0,0,0.16)" stroke-width="1"/>
<path d="M35.8 278.5 H503.5 V160.5" fill="none" stroke="rgba(0,0,0,0.11)" stroke-width="1"/>
<path d="M36.8 279.5 H504.5 V161.5" fill="none" stroke="rgba(0,0,0,0.06)" stroke-width="1"/>
<rect x="33.3" y="158.0" width="467.7" height="118.0" fill="none" stroke="#999999" stroke-width="2"/>
<line x1="27" y1="159.39999999999998" x2="33.3" y2="159.39999999999998" stroke="rgba(0,0,0,0.08)" stroke-width="1.2"/>
<line x1="27" y1="158.2" x2="33.3" y2="158.2" stroke="#8f8f8f" stroke-width="1.3"/>
<text x="23" y="162.79999999999998" text-anchor="end" class="yl">2</text>
<line x1="27" y1="198.7" x2="33.3" y2="198.7" stroke="rgba(0,0,0,0.08)" stroke-width="1.2"/>
<line x1="27" y1="197.5" x2="33.3" y2="197.5" stroke="#8f8f8f" stroke-width="1.3"/>
<text x="23" y="202.1" text-anchor="end" class="yl">1</text>
<line x1="27" y1="238.7" x2="33.3" y2="238.7" stroke="rgba(0,0,0,0.08)" stroke-width="1.2"/>
<line x1="27" y1="237.5" x2="33.3" y2="237.5" stroke="#8f8f8f" stroke-width="1.3"/>
<text x="23" y="242.1" text-anchor="end" class="yl">0</text>
<line x1="27" y1="277.4" x2="33.3" y2="277.4" stroke="rgba(0,0,0,0.08)" stroke-width="1.2"/>
<line x1="27" y1="276.2" x2="33.3" y2="276.2" stroke="#8f8f8f" stroke-width="1.3"/>
<text x="23" y="280.8" text-anchor="end" class="yl">-1</text>
<line x1="34.3" y1="277.0" x2="34.3" y2="281.0" stroke="rgba(0,0,0,0.07)" stroke-width="1.2"/>
<line x1="33.3" y1="276.0" x2="33.3" y2="280.0" stroke="#a8a8a8" stroke-width="1.2"/>
<text transform="translate(29.799999999999997,286.5) rotate(-45)" x="0" y="9" text-anchor="end" class="xl">31-Aug-2024</text>
<line x1="101.5" y1="277.0" x2="101.5" y2="281.0" stroke="rgba(0,0,0,0.07)" stroke-width="1.2"/>
<line x1="100.5" y1="276.0" x2="100.5" y2="280.0" stroke="#a8a8a8" stroke-width="1.2"/>
<text transform="translate(97.0,286.5) rotate(-45)" x="0" y="9" text-anchor="end" class="xl">2-Sep-2024</text>
<line x1="168.5" y1="277.0" x2="168.5" y2="281.0" stroke="rgba(0,0,0,0.07)" stroke-width="1.2"/>
<line x1="167.5" y1="276.0" x2="167.5" y2="280.0" stroke="#a8a8a8" stroke-width="1.2"/>
<text transform="translate(164.0,286.5) rotate(-45)" x="0" y="9" text-anchor="end" class="xl">4-Sep-2024</text>
<line x1="235.5" y1="277.0" x2="235.5" y2="281.0" stroke="rgba(0,0,0,0.07)" stroke-width="1.2"/>
<line x1="234.5" y1="276.0" x2="234.5" y2="280.0" stroke="#a8a8a8" stroke-width="1.2"/>
<text transform="translate(231.0,286.5) rotate(-45)" x="0" y="9" text-anchor="end" class="xl">6-Sep-2024</text>
<line x1="301.5" y1="277.0" x2="301.5" y2="281.0" stroke="rgba(0,0,0,0.07)" stroke-width="1.2"/>
<line x1="300.5" y1="276.0" x2="300.5" y2="280.0" stroke="#a8a8a8" stroke-width="1.2"/>
<text transform="translate(297.0,286.5) rotate(-45)" x="0" y="9" text-anchor="end" class="xl">8-Sep-2024</text>
<line x1="368.5" y1="277.0" x2="368.5" y2="281.0" stroke="rgba(0,0,0,0.07)" stroke-width="1.2"/>
<line x1="367.5" y1="276.0" x2="367.5" y2="280.0" stroke="#a8a8a8" stroke-width="1.2"/>
<text transform="translate(364.0,286.5) rotate(-45)" x="0" y="9" text-anchor="end" class="xl">10-Sep-2024</text>
<line x1="435.5" y1="277.0" x2="435.5" y2="281.0" stroke="rgba(0,0,0,0.07)" stroke-width="1.2"/>
<line x1="434.5" y1="276.0" x2="434.5" y2="280.0" stroke="#a8a8a8" stroke-width="1.2"/>
<text transform="translate(431.0,286.5) rotate(-45)" x="0" y="9" text-anchor="end" class="xl">12-Sep-2024</text>
<line x1="502.0" y1="277.0" x2="502.0" y2="281.0" stroke="rgba(0,0,0,0.07)" stroke-width="1.2"/>
<line x1="501.0" y1="276.0" x2="501.0" y2="280.0" stroke="#a8a8a8" stroke-width="1.2"/>
<text transform="translate(497.5,286.5) rotate(-45)" x="0" y="9" text-anchor="end" class="xl">14-Sep-2024</text>
<line x1="346.5" y1="196.88333333333335" x2="346.5" y2="236.86666666666667" stroke="rgba(0,0,0,0.16)" stroke-width="2"/>
<line x1="344.1" y1="196.88333333333335" x2="344.1" y2="236.86666666666667" stroke="#4bb2c5" stroke-width="2.8"/>
<line x1="351.8" y1="196.88333333333335" x2="351.8" y2="236.86666666666667" stroke="rgba(0,0,0,0.16)" stroke-width="2"/>
<line x1="348.8" y1="196.88333333333335" x2="348.8" y2="236.86666666666667" stroke="#4bb2c5" stroke-width="4.0"/>
<line x1="68.5" y1="198.88333333333335" x2="469.5" y2="198.88333333333335" stroke="#000" stroke-width="9.9" stroke-linecap="round"/>
<line x1="66.9" y1="196.88333333333335" x2="467.9" y2="196.88333333333335" stroke="#4bb2c5" stroke-width="9.9" stroke-linecap="round"/>
<rect x="340.3" y="233.46666666666667" width="15.0" height="9.6" rx="4.8" fill="rgba(0,0,0,0.14)"/>
<rect x="339.1" y="232.06666666666666" width="15.0" height="9.6" rx="4.8" fill="#4bb2c5"/>
<rect x="372.5" y="170.5" width="116" height="29.7" fill="rgba(255,255,255,0.6)" stroke="#cccccc" stroke-width="1"/>
<rect x="376.5" y="178.5" width="15" height="13" fill="none" stroke="#cccccc" stroke-width="1"/>
<rect x="378" y="180" width="12" height="10" fill="#4bb2c5"/>
<text x="397.5" y="190" class="lg">Service state</text>
</g></g>
<clipPath id="cp1036_250"><rect x="1047" y="367" width="500" height="231"/></clipPath>
<g clip-path="url(#cp1036_250)"><g transform="translate(1036,250)">
<rect x="33.3" y="158.0" width="467.7" height="118.0" fill="#fffdf6"/>
<line x1="100.5" y1="158.0" x2="100.5" y2="276.0" stroke="#cccccc" stroke-width="1"/>
<line x1="167.5" y1="158.0" x2="167.5" y2="276.0" stroke="#cccccc" stroke-width="1"/>
<line x1="234.5" y1="158.0" x2="234.5" y2="276.0" stroke="#cccccc" stroke-width="1"/>
<line x1="300.5" y1="158.0" x2="300.5" y2="276.0" stroke="#cccccc" stroke-width="1"/>
<line x1="367.5" y1="158.0" x2="367.5" y2="276.0" stroke="#cccccc" stroke-width="1"/>
<line x1="434.5" y1="158.0" x2="434.5" y2="276.0" stroke="#cccccc" stroke-width="1"/>
<line x1="33.3" y1="197.5" x2="501.0" y2="197.5" stroke="#cccccc" stroke-width="1"/>
<line x1="33.3" y1="237.5" x2="501.0" y2="237.5" stroke="#cccccc" stroke-width="1"/>
<path d="M34.8 277.5 H502.5 V159.5" fill="none" stroke="rgba(0,0,0,0.16)" stroke-width="1"/>
<path d="M35.8 278.5 H503.5 V160.5" fill="none" stroke="rgba(0,0,0,0.11)" stroke-width="1"/>
<path d="M36.8 279.5 H504.5 V161.5" fill="none" stroke="rgba(0,0,0,0.06)" stroke-width="1"/>
<rect x="33.3" y="158.0" width="467.7" height="118.0" fill="none" stroke="#999999" stroke-width="2"/>
<line x1="27" y1="159.39999999999998" x2="33.3" y2="159.39999999999998" stroke="rgba(0,0,0,0.08)" stroke-width="1.2"/>
<line x1="27" y1="158.2" x2="33.3" y2="158.2" stroke="#8f8f8f" stroke-width="1.3"/>
<text x="23" y="162.79999999999998" text-anchor="end" class="yl">2</text>
<line x1="27" y1="198.7" x2="33.3" y2="198.7" stroke="rgba(0,0,0,0.08)" stroke-width="1.2"/>
<line x1="27" y1="197.5" x2="33.3" y2="197.5" stroke="#8f8f8f" stroke-width="1.3"/>
<text x="23" y="202.1" text-anchor="end" class="yl">1</text>
<line x1="27" y1="238.7" x2="33.3" y2="238.7" stroke="rgba(0,0,0,0.08)" stroke-width="1.2"/>
<line x1="27" y1="237.5" x2="33.3" y2="237.5" stroke="#8f8f8f" stroke-width="1.3"/>
<text x="23" y="242.1" text-anchor="end" class="yl">0</text>
<line x1="27" y1="277.4" x2="33.3" y2="277.4" stroke="rgba(0,0,0,0.08)" stroke-width="1.2"/>
<line x1="27" y1="276.2" x2="33.3" y2="276.2" stroke="#8f8f8f" stroke-width="1.3"/>
<text x="23" y="280.8" text-anchor="end" class="yl">-1</text>
<line x1="34.3" y1="277.0" x2="34.3" y2="281.0" stroke="rgba(0,0,0,0.07)" stroke-width="1.2"/>
<line x1="33.3" y1="276.0" x2="33.3" y2="280.0" stroke="#a8a8a8" stroke-width="1.2"/>
<text transform="translate(29.799999999999997,286.5) rotate(-45)" x="0" y="9" text-anchor="end" class="xl">31-Aug-2024</text>
<line x1="101.5" y1="277.0" x2="101.5" y2="281.0" stroke="rgba(0,0,0,0.07)" stroke-width="1.2"/>
<line x1="100.5" y1="276.0" x2="100.5" y2="280.0" stroke="#a8a8a8" stroke-width="1.2"/>
<text transform="translate(97.0,286.5) rotate(-45)" x="0" y="9" text-anchor="end" class="xl">2-Sep-2024</text>
<line x1="168.5" y1="277.0" x2="168.5" y2="281.0" stroke="rgba(0,0,0,0.07)" stroke-width="1.2"/>
<line x1="167.5" y1="276.0" x2="167.5" y2="280.0" stroke="#a8a8a8" stroke-width="1.2"/>
<text transform="translate(164.0,286.5) rotate(-45)" x="0" y="9" text-anchor="end" class="xl">4-Sep-2024</text>
<line x1="235.5" y1="277.0" x2="235.5" y2="281.0" stroke="rgba(0,0,0,0.07)" stroke-width="1.2"/>
<line x1="234.5" y1="276.0" x2="234.5" y2="280.0" stroke="#a8a8a8" stroke-width="1.2"/>
<text transform="translate(231.0,286.5) rotate(-45)" x="0" y="9" text-anchor="end" class="xl">6-Sep-2024</text>
<line x1="301.5" y1="277.0" x2="301.5" y2="281.0" stroke="rgba(0,0,0,0.07)" stroke-width="1.2"/>
<line x1="300.5" y1="276.0" x2="300.5" y2="280.0" stroke="#a8a8a8" stroke-width="1.2"/>
<text transform="translate(297.0,286.5) rotate(-45)" x="0" y="9" text-anchor="end" class="xl">8-Sep-2024</text>
<line x1="368.5" y1="277.0" x2="368.5" y2="281.0" stroke="rgba(0,0,0,0.07)" stroke-width="1.2"/>
<line x1="367.5" y1="276.0" x2="367.5" y2="280.0" stroke="#a8a8a8" stroke-width="1.2"/>
<text transform="translate(364.0,286.5) rotate(-45)" x="0" y="9" text-anchor="end" class="xl">10-Sep-2024</text>
<line x1="435.5" y1="277.0" x2="435.5" y2="281.0" stroke="rgba(0,0,0,0.07)" stroke-width="1.2"/>
<line x1="434.5" y1="276.0" x2="434.5" y2="280.0" stroke="#a8a8a8" stroke-width="1.2"/>
<text transform="translate(431.0,286.5) rotate(-45)" x="0" y="9" text-anchor="end" class="xl">12-Sep-2024</text>
<line x1="502.0" y1="277.0" x2="502.0" y2="281.0" stroke="rgba(0,0,0,0.07)" stroke-width="1.2"/>
<line x1="501.0" y1="276.0" x2="501.0" y2="280.0" stroke="#a8a8a8" stroke-width="1.2"/>
<text transform="translate(497.5,286.5) rotate(-45)" x="0" y="9" text-anchor="end" class="xl">14-Sep-2024</text>
<line x1="214.5" y1="196.88333333333335" x2="214.5" y2="236.86666666666667" stroke="rgba(0,0,0,0.16)" stroke-width="2"/>
<line x1="212.0" y1="196.88333333333335" x2="212.0" y2="236.86666666666667" stroke="#4bb2c5" stroke-width="3.0"/>
<line x1="352.5" y1="196.88333333333335" x2="352.5" y2="236.86666666666667" stroke="rgba(0,0,0,0.16)" stroke-width="2"/>
<line x1="347.2" y1="196.88333333333335" x2="347.2" y2="236.86666666666667" stroke="#4bb2c5" stroke-width="8.6"/>
<line x1="420.6" y1="196.88333333333335" x2="420.6" y2="236.86666666666667" stroke="rgba(0,0,0,0.16)" stroke-width="2"/>
<line x1="417.1" y1="196.88333333333335" x2="417.1" y2="236.86666666666667" stroke="#4bb2c5" stroke-width="5.0"/>
<line x1="450.5" y1="196.88333333333335" x2="450.5" y2="236.86666666666667" stroke="rgba(0,0,0,0.16)" stroke-width="2"/>
<line x1="447.0" y1="196.88333333333335" x2="447.0" y2="236.86666666666667" stroke="#4bb2c5" stroke-width="5.0"/>
<line x1="68.5" y1="198.88333333333335" x2="469.5" y2="198.88333333333335" stroke="#000" stroke-width="9.9" stroke-linecap="round"/>
<line x1="66.9" y1="196.88333333333335" x2="467.9" y2="196.88333333333335" stroke="#4bb2c5" stroke-width="9.9" stroke-linecap="round"/>
<rect x="208.5" y="233.46666666666667" width="9.4" height="9.6" rx="4.8" fill="rgba(0,0,0,0.14)"/>
<rect x="340.4" y="233.46666666666667" width="15.6" height="9.6" rx="4.8" fill="rgba(0,0,0,0.14)"/>
<rect x="412.3" y="233.46666666666667" width="12.0" height="9.6" rx="4.8" fill="rgba(0,0,0,0.14)"/>
<rect x="442.0" y="233.46666666666667" width="12.4" height="9.6" rx="4.8" fill="rgba(0,0,0,0.14)"/>
<rect x="207.3" y="232.06666666666666" width="9.4" height="9.6" rx="4.8" fill="#4bb2c5"/>
<rect x="339.2" y="232.06666666666666" width="15.6" height="9.6" rx="4.8" fill="#4bb2c5"/>
<rect x="411.1" y="232.06666666666666" width="12.0" height="9.6" rx="4.8" fill="#4bb2c5"/>
<rect x="440.8" y="232.06666666666666" width="12.4" height="9.6" rx="4.8" fill="#4bb2c5"/>
<rect x="372.5" y="170.5" width="116" height="29.7" fill="rgba(255,255,255,0.6)" stroke="#cccccc" stroke-width="1"/>
<rect x="376.5" y="178.5" width="15" height="13" fill="none" stroke="#cccccc" stroke-width="1"/>
<rect x="378" y="180" width="12" height="10" fill="#4bb2c5"/>
<text x="397.5" y="190" class="lg">Service state</text>
</g></g>
<clipPath id="cp0_500"><rect x="11" y="617" width="500" height="231"/></clipPath>
<g clip-path="url(#cp0_500)"><g transform="translate(0,500)">
<rect x="33.3" y="158.0" width="467.7" height="118.0" fill="#fffdf6"/>
<line x1="100.5" y1="158.0" x2="100.5" y2="276.0" stroke="#cccccc" stroke-width="1"/>
<line x1="167.5" y1="158.0" x2="167.5" y2="276.0" stroke="#cccccc" stroke-width="1"/>
<line x1="234.5" y1="158.0" x2="234.5" y2="276.0" stroke="#cccccc" stroke-width="1"/>
<line x1="300.5" y1="158.0" x2="300.5" y2="276.0" stroke="#cccccc" stroke-width="1"/>
<line x1="367.5" y1="158.0" x2="367.5" y2="276.0" stroke="#cccccc" stroke-width="1"/>
<line x1="434.5" y1="158.0" x2="434.5" y2="276.0" stroke="#cccccc" stroke-width="1"/>
<line x1="33.3" y1="197.5" x2="501.0" y2="197.5" stroke="#cccccc" stroke-width="1"/>
<line x1="33.3" y1="237.5" x2="501.0" y2="237.5" stroke="#cccccc" stroke-width="1"/>
<path d="M34.8 277.5 H502.5 V159.5" fill="none" stroke="rgba(0,0,0,0.16)" stroke-width="1"/>
<path d="M35.8 278.5 H503.5 V160.5" fill="none" stroke="rgba(0,0,0,0.11)" stroke-width="1"/>
<path d="M36.8 279.5 H504.5 V161.5" fill="none" stroke="rgba(0,0,0,0.06)" stroke-width="1"/>
<rect x="33.3" y="158.0" width="467.7" height="118.0" fill="none" stroke="#999999" stroke-width="2"/>
<line x1="27" y1="159.39999999999998" x2="33.3" y2="159.39999999999998" stroke="rgba(0,0,0,0.08)" stroke-width="1.2"/>
<line x1="27" y1="158.2" x2="33.3" y2="158.2" stroke="#8f8f8f" stroke-width="1.3"/>
<text x="23" y="162.79999999999998" text-anchor="end" class="yl">2</text>
<line x1="27" y1="198.7" x2="33.3" y2="198.7" stroke="rgba(0,0,0,0.08)" stroke-width="1.2"/>
<line x1="27" y1="197.5" x2="33.3" y2="197.5" stroke="#8f8f8f" stroke-width="1.3"/>
<text x="23" y="202.1" text-anchor="end" class="yl">1</text>
<line x1="27" y1="238.7" x2="33.3" y2="238.7" stroke="rgba(0,0,0,0.08)" stroke-width="1.2"/>
<line x1="27" y1="237.5" x2="33.3" y2="237.5" stroke="#8f8f8f" stroke-width="1.3"/>
<text x="23" y="242.1" text-anchor="end" class="yl">0</text>
<line x1="27" y1="277.4" x2="33.3" y2="277.4" stroke="rgba(0,0,0,0.08)" stroke-width="1.2"/>
<line x1="27" y1="276.2" x2="33.3" y2="276.2" stroke="#8f8f8f" stroke-width="1.3"/>
<text x="23" y="280.8" text-anchor="end" class="yl">-1</text>
<line x1="34.3" y1="277.0" x2="34.3" y2="281.0" stroke="rgba(0,0,0,0.07)" stroke-width="1.2"/>
<line x1="33.3" y1="276.0" x2="33.3" y2="280.0" stroke="#a8a8a8" stroke-width="1.2"/>
<text transform="translate(29.799999999999997,286.5) rotate(-45)" x="0" y="9" text-anchor="end" class="xl">31-Aug-2024</text>
<line x1="101.5" y1="277.0" x2="101.5" y2="281.0" stroke="rgba(0,0,0,0.07)" stroke-width="1.2"/>
<line x1="100.5" y1="276.0" x2="100.5" y2="280.0" stroke="#a8a8a8" stroke-width="1.2"/>
<text transform="translate(97.0,286.5) rotate(-45)" x="0" y="9" text-anchor="end" class="xl">2-Sep-2024</text>
<line x1="168.5" y1="277.0" x2="168.5" y2="281.0" stroke="rgba(0,0,0,0.07)" stroke-width="1.2"/>
<line x1="167.5" y1="276.0" x2="167.5" y2="280.0" stroke="#a8a8a8" stroke-width="1.2"/>
<text transform="translate(164.0,286.5) rotate(-45)" x="0" y="9" text-anchor="end" class="xl">4-Sep-2024</text>
<line x1="235.5" y1="277.0" x2="235.5" y2="281.0" stroke="rgba(0,0,0,0.07)" stroke-width="1.2"/>
<line x1="234.5" y1="276.0" x2="234.5" y2="280.0" stroke="#a8a8a8" stroke-width="1.2"/>
<text transform="translate(231.0,286.5) rotate(-45)" x="0" y="9" text-anchor="end" class="xl">6-Sep-2024</text>
<line x1="301.5" y1="277.0" x2="301.5" y2="281.0" stroke="rgba(0,0,0,0.07)" stroke-width="1.2"/>
<line x1="300.5" y1="276.0" x2="300.5" y2="280.0" stroke="#a8a8a8" stroke-width="1.2"/>
<text transform="translate(297.0,286.5) rotate(-45)" x="0" y="9" text-anchor="end" class="xl">8-Sep-2024</text>
<line x1="368.5" y1="277.0" x2="368.5" y2="281.0" stroke="rgba(0,0,0,0.07)" stroke-width="1.2"/>
<line x1="367.5" y1="276.0" x2="367.5" y2="280.0" stroke="#a8a8a8" stroke-width="1.2"/>
<text transform="translate(364.0,286.5) rotate(-45)" x="0" y="9" text-anchor="end" class="xl">10-Sep-2024</text>
<line x1="435.5" y1="277.0" x2="435.5" y2="281.0" stroke="rgba(0,0,0,0.07)" stroke-width="1.2"/>
<line x1="434.5" y1="276.0" x2="434.5" y2="280.0" stroke="#a8a8a8" stroke-width="1.2"/>
<text transform="translate(431.0,286.5) rotate(-45)" x="0" y="9" text-anchor="end" class="xl">12-Sep-2024</text>
<line x1="502.0" y1="277.0" x2="502.0" y2="281.0" stroke="rgba(0,0,0,0.07)" stroke-width="1.2"/>
<line x1="501.0" y1="276.0" x2="501.0" y2="280.0" stroke="#a8a8a8" stroke-width="1.2"/>
<text transform="translate(497.5,286.5) rotate(-45)" x="0" y="9" text-anchor="end" class="xl">14-Sep-2024</text>
<line x1="214.7" y1="196.88333333333335" x2="214.7" y2="236.86666666666667" stroke="rgba(0,0,0,0.16)" stroke-width="2"/>
<line x1="212.2" y1="196.88333333333335" x2="212.2" y2="236.86666666666667" stroke="#4bb2c5" stroke-width="3.0"/>
<line x1="352.0" y1="196.88333333333335" x2="352.0" y2="236.86666666666667" stroke="rgba(0,0,0,0.16)" stroke-width="2"/>
<line x1="346.8" y1="196.88333333333335" x2="346.8" y2="236.86666666666667" stroke="#4bb2c5" stroke-width="8.4"/>
<line x1="418.8" y1="196.88333333333335" x2="418.8" y2="236.86666666666667" stroke="rgba(0,0,0,0.16)" stroke-width="2"/>
<line x1="416.3" y1="196.88333333333335" x2="416.3" y2="236.86666666666667" stroke="#4bb2c5" stroke-width="3.0"/>
<line x1="451.1" y1="196.88333333333335" x2="451.1" y2="236.86666666666667" stroke="rgba(0,0,0,0.16)" stroke-width="2"/>
<line x1="448.6" y1="196.88333333333335" x2="448.6" y2="236.86666666666667" stroke="#4bb2c5" stroke-width="3.0"/>
<line x1="68.5" y1="198.88333333333335" x2="469.5" y2="198.88333333333335" stroke="#000" stroke-width="9.9" stroke-linecap="round"/>
<line x1="66.9" y1="196.88333333333335" x2="467.9" y2="196.88333333333335" stroke="#4bb2c5" stroke-width="9.9" stroke-linecap="round"/>
<rect x="208.7" y="233.46666666666667" width="9.4" height="9.6" rx="4.8" fill="rgba(0,0,0,0.14)"/>
<rect x="340.29999999999995" y="233.46666666666667" width="15.1" height="9.6" rx="4.8" fill="rgba(0,0,0,0.14)"/>
<rect x="412.8" y="233.46666666666667" width="9.4" height="9.6" rx="4.8" fill="rgba(0,0,0,0.14)"/>
<rect x="445.1" y="233.46666666666667" width="9.4" height="9.6" rx="4.8" fill="rgba(0,0,0,0.14)"/>
<rect x="207.5" y="232.06666666666666" width="9.4" height="9.6" rx="4.8" fill="#4bb2c5"/>
<rect x="339.09999999999997" y="232.06666666666666" width="15.1" height="9.6" rx="4.8" fill="#4bb2c5"/>
<rect x="411.6" y="232.06666666666666" width="9.4" height="9.6" rx="4.8" fill="#4bb2c5"/>
<rect x="443.90000000000003" y="232.06666666666666" width="9.4" height="9.6" rx="4.8" fill="#4bb2c5"/>
<rect x="372.5" y="170.5" width="116" height="29.7" fill="rgba(255,255,255,0.6)" stroke="#cccccc" stroke-width="1"/>
<rect x="376.5" y="178.5" width="15" height="13" fill="none" stroke="#cccccc" stroke-width="1"/>
<rect x="378" y="180" width="12" height="10" fill="#4bb2c5"/>
<text x="397.5" y="190" class="lg">Service state</text>
</g></g>
<clipPath id="cp518_500"><rect x="529" y="617" width="500" height="231"/></clipPath>
<g clip-path="url(#cp518_500)"><g transform="translate(518,500)">
<rect x="33.3" y="158.0" width="467.7" height="118.0" fill="#fffdf6"/>
<line x1="100.5" y1="158.0" x2="100.5" y2="276.0" stroke="#cccccc" stroke-width="1"/>
<line x1="167.5" y1="158.0" x2="167.5" y2="276.0" stroke="#cccccc" stroke-width="1"/>
<line x1="234.5" y1="158.0" x2="234.5" y2="276.0" stroke="#cccccc" stroke-width="1"/>
<line x1="300.5" y1="158.0" x2="300.5" y2="276.0" stroke="#cccccc" stroke-width="1"/>
<line x1="367.5" y1="158.0" x2="367.5" y2="276.0" stroke="#cccccc" stroke-width="1"/>
<line x1="434.5" y1="158.0" x2="434.5" y2="276.0" stroke="#cccccc" stroke-width="1"/>
<line x1="33.3" y1="197.5" x2="501.0" y2="197.5" stroke="#cccccc" stroke-width="1"/>
<line x1="33.3" y1="237.5" x2="501.0" y2="237.5" stroke="#cccccc" stroke-width="1"/>
<path d="M34.8 277.5 H502.5 V159.5" fill="none" stroke="rgba(0,0,0,0.16)" stroke-width="1"/>
<path d="M35.8 278.5 H503.5 V160.5" fill="none" stroke="rgba(0,0,0,0.11)" stroke-width="1"/>
<path d="M36.8 279.5 H504.5 V161.5" fill="none" stroke="rgba(0,0,0,0.06)" stroke-width="1"/>
<rect x="33.3" y="158.0" width="467.7" height="118.0" fill="none" stroke="#999999" stroke-width="2"/>
<line x1="27" y1="159.39999999999998" x2="33.3" y2="159.39999999999998" stroke="rgba(0,0,0,0.08)" stroke-width="1.2"/>
<line x1="27" y1="158.2" x2="33.3" y2="158.2" stroke="#8f8f8f" stroke-width="1.3"/>
<text x="23" y="162.79999999999998" text-anchor="end" class="yl">2</text>
<line x1="27" y1="198.7" x2="33.3" y2="198.7" stroke="rgba(0,0,0,0.08)" stroke-width="1.2"/>
<line x1="27" y1="197.5" x2="33.3" y2="197.5" stroke="#8f8f8f" stroke-width="1.3"/>
<text x="23" y="202.1" text-anchor="end" class="yl">1</text>
<line x1="27" y1="238.7" x2="33.3" y2="238.7" stroke="rgba(0,0,0,0.08)" stroke-width="1.2"/>
<line x1="27" y1="237.5" x2="33.3" y2="237.5" stroke="#8f8f8f" stroke-width="1.3"/>
<text x="23" y="242.1" text-anchor="end" class="yl">0</text>
<line x1="27" y1="277.4" x2="33.3" y2="277.4" stroke="rgba(0,0,0,0.08)" stroke-width="1.2"/>
<line x1="27" y1="276.2" x2="33.3" y2="276.2" stroke="#8f8f8f" stroke-width="1.3"/>
<text x="23" y="280.8" text-anchor="end" class="yl">-1</text>
<line x1="34.3" y1="277.0" x2="34.3" y2="281.0" stroke="rgba(0,0,0,0.07)" stroke-width="1.2"/>
<line x1="33.3" y1="276.0" x2="33.3" y2="280.0" stroke="#a8a8a8" stroke-width="1.2"/>
<text transform="translate(29.799999999999997,286.5) rotate(-45)" x="0" y="9" text-anchor="end" class="xl">31-Aug-2024</text>
<line x1="101.5" y1="277.0" x2="101.5" y2="281.0" stroke="rgba(0,0,0,0.07)" stroke-width="1.2"/>
<line x1="100.5" y1="276.0" x2="100.5" y2="280.0" stroke="#a8a8a8" stroke-width="1.2"/>
<text transform="translate(97.0,286.5) rotate(-45)" x="0" y="9" text-anchor="end" class="xl">2-Sep-2024</text>
<line x1="168.5" y1="277.0" x2="168.5" y2="281.0" stroke="rgba(0,0,0,0.07)" stroke-width="1.2"/>
<line x1="167.5" y1="276.0" x2="167.5" y2="280.0" stroke="#a8a8a8" stroke-width="1.2"/>
<text transform="translate(164.0,286.5) rotate(-45)" x="0" y="9" text-anchor="end" class="xl">4-Sep-2024</text>
<line x1="235.5" y1="277.0" x2="235.5" y2="281.0" stroke="rgba(0,0,0,0.07)" stroke-width="1.2"/>
<line x1="234.5" y1="276.0" x2="234.5" y2="280.0" stroke="#a8a8a8" stroke-width="1.2"/>
<text transform="translate(231.0,286.5) rotate(-45)" x="0" y="9" text-anchor="end" class="xl">6-Sep-2024</text>
<line x1="301.5" y1="277.0" x2="301.5" y2="281.0" stroke="rgba(0,0,0,0.07)" stroke-width="1.2"/>
<line x1="300.5" y1="276.0" x2="300.5" y2="280.0" stroke="#a8a8a8" stroke-width="1.2"/>
<text transform="translate(297.0,286.5) rotate(-45)" x="0" y="9" text-anchor="end" class="xl">8-Sep-2024</text>
<line x1="368.5" y1="277.0" x2="368.5" y2="281.0" stroke="rgba(0,0,0,0.07)" stroke-width="1.2"/>
<line x1="367.5" y1="276.0" x2="367.5" y2="280.0" stroke="#a8a8a8" stroke-width="1.2"/>
<text transform="translate(364.0,286.5) rotate(-45)" x="0" y="9" text-anchor="end" class="xl">10-Sep-2024</text>
<line x1="435.5" y1="277.0" x2="435.5" y2="281.0" stroke="rgba(0,0,0,0.07)" stroke-width="1.2"/>
<line x1="434.5" y1="276.0" x2="434.5" y2="280.0" stroke="#a8a8a8" stroke-width="1.2"/>
<text transform="translate(431.0,286.5) rotate(-45)" x="0" y="9" text-anchor="end" class="xl">12-Sep-2024</text>
<line x1="502.0" y1="277.0" x2="502.0" y2="281.0" stroke="rgba(0,0,0,0.07)" stroke-width="1.2"/>
<line x1="501.0" y1="276.0" x2="501.0" y2="280.0" stroke="#a8a8a8" stroke-width="1.2"/>
<text transform="translate(497.5,286.5) rotate(-45)" x="0" y="9" text-anchor="end" class="xl">14-Sep-2024</text>
<line x1="346.5" y1="196.88333333333335" x2="346.5" y2="236.86666666666667" stroke="rgba(0,0,0,0.16)" stroke-width="2"/>
<line x1="344.1" y1="196.88333333333335" x2="344.1" y2="236.86666666666667" stroke="#4bb2c5" stroke-width="2.8"/>
<line x1="352.1" y1="196.88333333333335" x2="352.1" y2="236.86666666666667" stroke="rgba(0,0,0,0.16)" stroke-width="2"/>
<line x1="349.1" y1="196.88333333333335" x2="349.1" y2="236.86666666666667" stroke="#4bb2c5" stroke-width="4.0"/>
<line x1="68.5" y1="198.88333333333335" x2="469.5" y2="198.88333333333335" stroke="#000" stroke-width="9.9" stroke-linecap="round"/>
<line x1="66.9" y1="196.88333333333335" x2="467.9" y2="196.88333333333335" stroke="#4bb2c5" stroke-width="9.9" stroke-linecap="round"/>
<rect x="340.45" y="233.46666666666667" width="15.0" height="9.6" rx="4.8" fill="rgba(0,0,0,0.14)"/>
<rect x="339.25" y="232.06666666666666" width="15.0" height="9.6" rx="4.8" fill="#4bb2c5"/>
<rect x="372.5" y="170.5" width="116" height="29.7" fill="rgba(255,255,255,0.6)" stroke="#cccccc" stroke-width="1"/>
<rect x="376.5" y="178.5" width="15" height="13" fill="none" stroke="#cccccc" stroke-width="1"/>
<rect x="378" y="180" width="12" height="10" fill="#4bb2c5"/>
<text x="397.5" y="190" class="lg">Service state</text>
</g></g>
<clipPath id="cp1036_500"><rect x="1047" y="617" width="500" height="231"/></clipPath>
<g clip-path="url(#cp1036_500)"><g transform="translate(1036,500)">
<rect x="33.3" y="158.0" width="467.7" height="118.0" fill="#fffdf6"/>
<line x1="100.5" y1="158.0" x2="100.5" y2="276.0" stroke="#cccccc" stroke-width="1"/>
<line x1="167.5" y1="158.0" x2="167.5" y2="276.0" stroke="#cccccc" stroke-width="1"/>
<line x1="234.5" y1="158.0" x2="234.5" y2="276.0" stroke="#cccccc" stroke-width="1"/>
<line x1="300.5" y1="158.0" x2="300.5" y2="276.0" stroke="#cccccc" stroke-width="1"/>
<line x1="367.5" y1="158.0" x2="367.5" y2="276.0" stroke="#cccccc" stroke-width="1"/>
<line x1="434.5" y1="158.0" x2="434.5" y2="276.0" stroke="#cccccc" stroke-width="1"/>
<line x1="33.3" y1="197.5" x2="501.0" y2="197.5" stroke="#cccccc" stroke-width="1"/>
<line x1="33.3" y1="237.5" x2="501.0" y2="237.5" stroke="#cccccc" stroke-width="1"/>
<path d="M34.8 277.5 H502.5 V159.5" fill="none" stroke="rgba(0,0,0,0.16)" stroke-width="1"/>
<path d="M35.8 278.5 H503.5 V160.5" fill="none" stroke="rgba(0,0,0,0.11)" stroke-width="1"/>
<path d="M36.8 279.5 H504.5 V161.5" fill="none" stroke="rgba(0,0,0,0.06)" stroke-width="1"/>
<rect x="33.3" y="158.0" width="467.7" height="118.0" fill="none" stroke="#999999" stroke-width="2"/>
<line x1="27" y1="159.39999999999998" x2="33.3" y2="159.39999999999998" stroke="rgba(0,0,0,0.08)" stroke-width="1.2"/>
<line x1="27" y1="158.2" x2="33.3" y2="158.2" stroke="#8f8f8f" stroke-width="1.3"/>
<text x="23" y="162.79999999999998" text-anchor="end" class="yl">2</text>
<line x1="27" y1="198.7" x2="33.3" y2="198.7" stroke="rgba(0,0,0,0.08)" stroke-width="1.2"/>
<line x1="27" y1="197.5" x2="33.3" y2="197.5" stroke="#8f8f8f" stroke-width="1.3"/>
<text x="23" y="202.1" text-anchor="end" class="yl">1</text>
<line x1="27" y1="238.7" x2="33.3" y2="238.7" stroke="rgba(0,0,0,0.08)" stroke-width="1.2"/>
<line x1="27" y1="237.5" x2="33.3" y2="237.5" stroke="#8f8f8f" stroke-width="1.3"/>
<text x="23" y="242.1" text-anchor="end" class="yl">0</text>
<line x1="27" y1="277.4" x2="33.3" y2="277.4" stroke="rgba(0,0,0,0.08)" stroke-width="1.2"/>
<line x1="27" y1="276.2" x2="33.3" y2="276.2" stroke="#8f8f8f" stroke-width="1.3"/>
<text x="23" y="280.8" text-anchor="end" class="yl">-1</text>
<line x1="34.3" y1="277.0" x2="34.3" y2="281.0" stroke="rgba(0,0,0,0.07)" stroke-width="1.2"/>
<line x1="33.3" y1="276.0" x2="33.3" y2="280.0" stroke="#a8a8a8" stroke-width="1.2"/>
<text transform="translate(29.799999999999997,286.5) rotate(-45)" x="0" y="9" text-anchor="end" class="xl">31-Aug-2024</text>
<line x1="101.5" y1="277.0" x2="101.5" y2="281.0" stroke="rgba(0,0,0,0.07)" stroke-width="1.2"/>
<line x1="100.5" y1="276.0" x2="100.5" y2="280.0" stroke="#a8a8a8" stroke-width="1.2"/>
<text transform="translate(97.0,286.5) rotate(-45)" x="0" y="9" text-anchor="end" class="xl">2-Sep-2024</text>
<line x1="168.5" y1="277.0" x2="168.5" y2="281.0" stroke="rgba(0,0,0,0.07)" stroke-width="1.2"/>
<line x1="167.5" y1="276.0" x2="167.5" y2="280.0" stroke="#a8a8a8" stroke-width="1.2"/>
<text transform="translate(164.0,286.5) rotate(-45)" x="0" y="9" text-anchor="end" class="xl">4-Sep-2024</text>
<line x1="235.5" y1="277.0" x2="235.5" y2="281.0" stroke="rgba(0,0,0,0.07)" stroke-width="1.2"/>
<line x1="234.5" y1="276.0" x2="234.5" y2="280.0" stroke="#a8a8a8" stroke-width="1.2"/>
<text transform="translate(231.0,286.5) rotate(-45)" x="0" y="9" text-anchor="end" class="xl">6-Sep-2024</text>
<line x1="301.5" y1="277.0" x2="301.5" y2="281.0" stroke="rgba(0,0,0,0.07)" stroke-width="1.2"/>
<line x1="300.5" y1="276.0" x2="300.5" y2="280.0" stroke="#a8a8a8" stroke-width="1.2"/>
<text transform="translate(297.0,286.5) rotate(-45)" x="0" y="9" text-anchor="end" class="xl">8-Sep-2024</text>
<line x1="368.5" y1="277.0" x2="368.5" y2="281.0" stroke="rgba(0,0,0,0.07)" stroke-width="1.2"/>
<line x1="367.5" y1="276.0" x2="367.5" y2="280.0" stroke="#a8a8a8" stroke-width="1.2"/>
<text transform="translate(364.0,286.5) rotate(-45)" x="0" y="9" text-anchor="end" class="xl">10-Sep-2024</text>
<line x1="435.5" y1="277.0" x2="435.5" y2="281.0" stroke="rgba(0,0,0,0.07)" stroke-width="1.2"/>
<line x1="434.5" y1="276.0" x2="434.5" y2="280.0" stroke="#a8a8a8" stroke-width="1.2"/>
<text transform="translate(431.0,286.5) rotate(-45)" x="0" y="9" text-anchor="end" class="xl">12-Sep-2024</text>
<line x1="502.0" y1="277.0" x2="502.0" y2="281.0" stroke="rgba(0,0,0,0.07)" stroke-width="1.2"/>
<line x1="501.0" y1="276.0" x2="501.0" y2="280.0" stroke="#a8a8a8" stroke-width="1.2"/>
<text transform="translate(497.5,286.5) rotate(-45)" x="0" y="9" text-anchor="end" class="xl">14-Sep-2024</text>
<line x1="346.59999999999997" y1="196.88333333333335" x2="346.59999999999997" y2="236.86666666666667" stroke="rgba(0,0,0,0.16)" stroke-width="2"/>
<line x1="344.2" y1="196.88333333333335" x2="344.2" y2="236.86666666666667" stroke="#4bb2c5" stroke-width="2.8"/>
<line x1="352.1" y1="196.88333333333335" x2="352.1" y2="236.86666666666667" stroke="rgba(0,0,0,0.16)" stroke-width="2"/>
<line x1="349.1" y1="196.88333333333335" x2="349.1" y2="236.86666666666667" stroke="#4bb2c5" stroke-width="4.0"/>
<line x1="68.5" y1="198.88333333333335" x2="469.5" y2="198.88333333333335" stroke="#000" stroke-width="9.9" stroke-linecap="round"/>
<line x1="66.9" y1="196.88333333333335" x2="467.9" y2="196.88333333333335" stroke="#4bb2c5" stroke-width="9.9" stroke-linecap="round"/>
<rect x="340.2" y="233.46666666666667" width="15.0" height="9.6" rx="4.8" fill="rgba(0,0,0,0.14)"/>
<rect x="339.0" y="232.06666666666666" width="15.0" height="9.6" rx="4.8" fill="#4bb2c5"/>
<rect x="372.5" y="170.5" width="116" height="29.7" fill="rgba(255,255,255,0.6)" stroke="#cccccc" stroke-width="1"/>
<rect x="376.5" y="178.5" width="15" height="13" fill="none" stroke="#cccccc" stroke-width="1"/>
<rect x="378" y="180" width="12" height="10" fill="#4bb2c5"/>
<text x="397.5" y="190" class="lg">Service state</text>
</g></g>
</svg>
</body></html>
